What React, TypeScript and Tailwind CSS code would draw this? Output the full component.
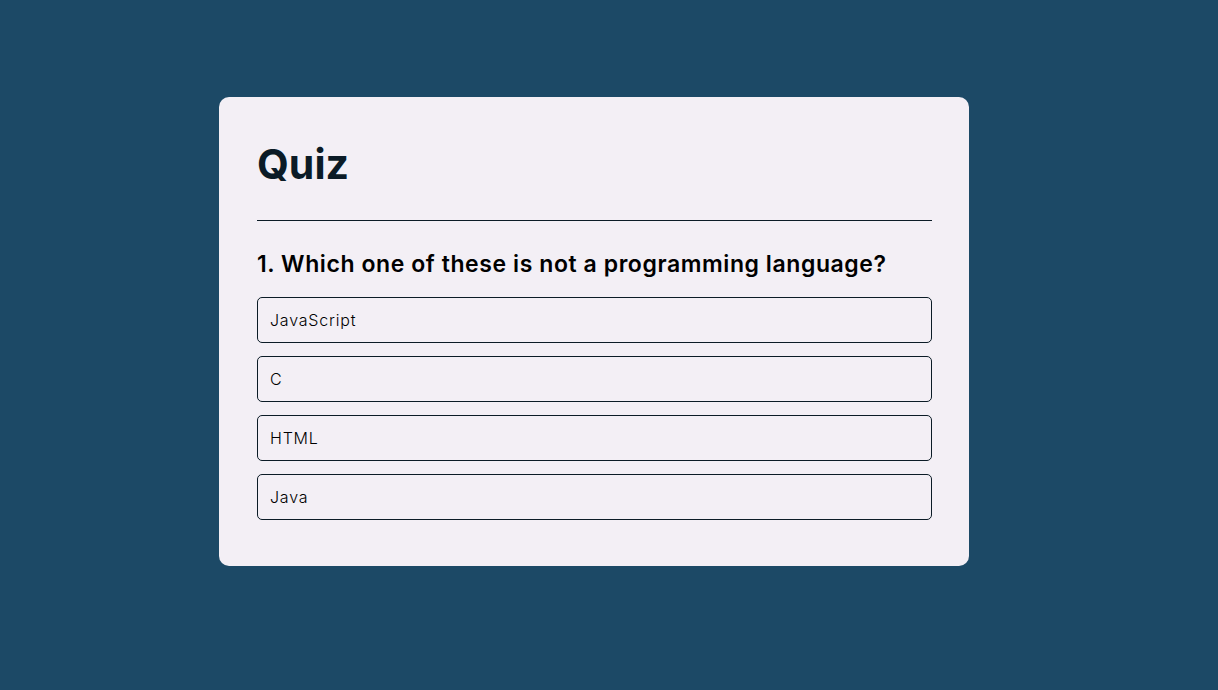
const options = ["JavaScript", "C", "HTML", "Java"];

export default function App() {
  return (
    <div className="min-h-screen w-full bg-[#1c4966] pt-[97px] font-['Inter',sans-serif]">
      <div className="ml-[219px] w-[750px] rounded-[10px] bg-[#f3eff5] pl-[38px] pr-[37px] pt-[44px] pb-[46px]">
        <h1 className="text-[41px] font-bold leading-[46px] text-[#0b1b26]">Quiz</h1>
        <hr className="mt-[33px] border-0 border-t border-[#0b1b26]" />
        <h2 className="mt-[28px] text-[23px] font-semibold leading-[30px] tracking-[0.58px] text-black">
          1. Which one of these is not a programming language?
        </h2>
        <ul className="mt-[18px] flex flex-col gap-[13px]">
          {options.map((opt) => (
            <li
              key={opt}
              className="flex h-[46px] items-center rounded-[5px] border border-[#0b1b26] px-[12px] text-[16px] font-light tracking-[0.8px] text-black"
            >
              {opt}
            </li>
          ))}
        </ul>
      </div>
    </div>
  );
}
